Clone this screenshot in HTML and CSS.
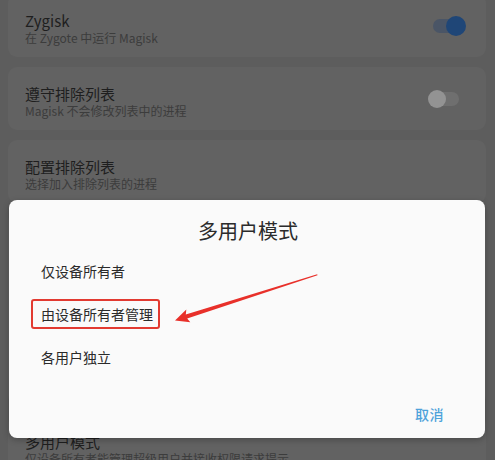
FILE: index.html
```html
<!DOCTYPE html>
<html lang="zh-CN">
<head>
<meta charset="utf-8">
<title>多用户模式</title>
<link rel="stylesheet" href="styles.css">
</head>
<body>
<div class="screen">
  <div class="list">
    <div class="card first">
      <div class="texts">
        <div class="title">Zygisk</div>
        <div class="sub">在 Zygote 中运行 Magisk</div>
      </div>
      <div class="switch on"><span class="track"></span><span class="thumb"></span></div>
    </div>
    <div class="card">
      <div class="texts">
        <div class="title">遵守排除列表</div>
        <div class="sub">Magisk 不会修改列表中的进程</div>
      </div>
      <div class="switch off"><span class="track"></span><span class="thumb"></span></div>
    </div>
    <div class="card">
      <div class="texts">
        <div class="title">配置排除列表</div>
        <div class="sub">选择加入排除列表的进程</div>
      </div>
    </div>
    <div class="card hidden-block"></div>
    <div class="card">
      <div class="texts">
        <div class="title">多用户模式</div>
        <div class="sub">仅设备所有者能管理超级用户并接收权限请求提示</div>
      </div>
    </div>
  </div>

  <div class="dialog">
    <div class="dlg-title">多用户模式</div>
    <div class="options">
      <div class="option">仅设备所有者</div>
      <div class="option"><span class="marked">由设备所有者管理</span></div>
      <div class="option">各用户独立</div>
    </div>
    <div class="actions"><span class="btn">取消</span></div>
  </div>

  <svg class="arrow" width="495" height="460" viewBox="0 0 495 460">
    <polygon points="175,320.5 186.3,309.5 185.8,314.4 317.2,274.3 317.5,275.3 187.2,318.4 190.3,322.2" fill="#e8302a"/>
  </svg>
</div>
</body>
</html>
```
FILE: styles.css
```css
* { box-sizing: border-box; }
html, body { margin: 0; padding: 0; }
body {
  background: #5d5d5d;
  font-family: "Noto Sans CJK SC", "Noto Sans", sans-serif;
}
.screen {
  position: relative;
  width: 495px;
  height: 460px;
  overflow: hidden;
  background: #5d5d5d;
}
.list {
  display: flex;
  flex-direction: column;
  gap: 10px;
  padding: 0 9px 0 8px;
}
.card {
  background: #626262;
  border-radius: 9px;
  height: 63px;
  padding: 18px 20px 0 17px;
  display: flex;
  justify-content: space-between;
  align-items: flex-start;
}
.card.first { margin-top: -6px; }
.card .switch { align-self: center; margin-top: -18px; }
.card.hidden-block { height: 192px; }
.title {
  font-size: 15px;
  line-height: 18px;
  color: #1e1e1e;
}
.sub {
  font-size: 12px;
  line-height: 15px;
  color: #3c3c3c;
  white-space: nowrap;
}
.switch {
  position: relative;
  width: 34px;
  height: 20px;
}
.switch .track {
  position: absolute;
  left: 1px;
  top: 3px;
  width: 30px;
  height: 14px;
  border-radius: 7px;
}
.switch .thumb {
  position: absolute;
  top: 0;
  width: 20px;
  height: 20px;
  border-radius: 50%;
}
.switch.on .track { background: #4a5566; }
.switch.on .thumb { right: 0; background: #1f4677; }
.switch.off { margin-right: 6px; }
.switch.off .track { background: #6f6f6f; left: 7px; width: 26px; }
.switch.off .thumb { left: 2px; top: 1px; width: 18px; height: 18px; background: #939393; }

.dialog {
  position: absolute;
  left: 9px;
  top: 200px;
  width: 476px;
  height: 238px;
  background: #fafafa;
  border-radius: 8px;
  box-shadow: 0 2px 6px rgba(0,0,0,0.25);
  display: flex;
  flex-direction: column;
}
.dlg-title {
  margin-top: 19px;
  text-align: center;
  font-size: 20px;
  line-height: 24px;
  color: #2b2b2b;
  padding-left: 2px;
}
.options {
  margin-top: 6px;
  display: flex;
  flex-direction: column;
}
.option {
  height: 43px;
  display: flex;
  align-items: center;
  padding-left: 32px;
  font-size: 14px;
  color: #2a2a2a;
}
.marked {
  margin-left: -10px;
  border: 2px solid #e23a31;
  border-radius: 3px;
  padding: 3px 5px 3px 8px;
  line-height: 20px;
}
.actions {
  margin-top: auto;
  margin-bottom: 14px;
  display: flex;
  justify-content: flex-end;
  padding-right: 41px;
}
.btn {
  font-size: 14px;
  line-height: 20px;
  color: #4ea2da;
  font-weight: 500;
  letter-spacing: 0.5px;
}
.arrow {
  position: absolute;
  left: 0;
  top: 0;
  pointer-events: none;
}
```
